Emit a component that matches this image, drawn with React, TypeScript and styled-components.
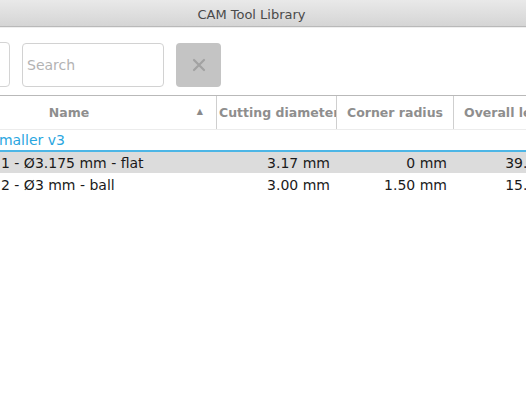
import styled, { createGlobalStyle } from 'styled-components';

const GlobalStyle = createGlobalStyle`
  html, body {
    margin: 0;
    padding: 0;
    background: #ffffff;
    overflow: hidden;
  }
  body {
    font-family: 'DejaVu Sans', 'Liberation Sans', sans-serif;
  }
`;

type Tool = { name: string; diameter: string; radius: string; length: string; selected?: boolean };

const tools: Tool[] = [
  { name: '1 - Ø3.175 mm - flat', diameter: '3.17 mm', radius: '0 mm', length: '39.00 mm', selected: true },
  { name: '2 - Ø3 mm - ball', diameter: '3.00 mm', radius: '1.50 mm', length: '15.00 mm' },
];

// column widths of the tool table, left to right
const cols = [275, 120, 117, 130];

export default function App() {
  return (
    <>
      <GlobalStyle />
      <Viewport>
        <Window>
          <TitleBar>
            <Title>CAM Tool Library</Title>
          </TitleBar>
          <Toolbar>
            <FilterBox />
            <SearchInput placeholder="Search" />
            <ClearButton>
              <svg width="14" height="14" viewBox="0 0 14 14">
                <path d="M2 2 L12 12 M12 2 L2 12" stroke="#a2a2a2" strokeWidth="2.2" strokeLinecap="round" />
              </svg>
            </ClearButton>
          </Toolbar>
          <Table>
            <HeaderRow>
              <HeaderCell $width={cols[0]}>
                <NameLabel>Name</NameLabel>
                <SortArrow>▲</SortArrow>
              </HeaderCell>
              <HeaderCell $width={cols[1]} $start={2}>Cutting diameter</HeaderCell>
              <HeaderCell $width={cols[2]}>Corner radius</HeaderCell>
              <HeaderCell $width={cols[3]} $start={10} $last>Overall length</HeaderCell>
            </HeaderRow>
            <GroupRow>Smaller v3</GroupRow>
            {tools.map((t) => (
              <ToolRow key={t.name} $selected={t.selected}>
                <NameCell $width={cols[0]}>{t.name}</NameCell>
                <ValueCell $width={cols[1]}>{t.diameter}</ValueCell>
                <ValueCell $width={cols[2]}>{t.radius}</ValueCell>
                <ValueCell $width={cols[3]}>{t.length}</ValueCell>
              </ToolRow>
            ))}
          </Table>
        </Window>
      </Viewport>
    </>
  );
}

const Viewport = styled.div`
  width: 526px;
  height: 394px;
  overflow: hidden;
  background: #ffffff;
`;

const Window = styled.div`
  width: 619px;
  margin-left: -58px;
  display: flex;
  flex-direction: column;
`;

const TitleBar = styled.div`
  height: 26px;
  border-bottom: 1px solid #b9b9b9;
  box-shadow: 0 1px 0 #efefef;
  background: linear-gradient(#e9e9e9, #d5d5d5);
  display: flex;
  align-items: center;
  justify-content: center;
`;

const Title = styled.span`
  font-size: 13px;
  color: #4a4a4a;
  padding-top: 3px;
`;

const Toolbar = styled.div`
  display: flex;
  align-items: center;
  gap: 12px;
  padding-top: 15px;
  height: 45px;
`;

const FilterBox = styled.div`
  width: 100px;
  height: 43px;
  margin-left: -34px;
  border: 1px solid #d4d4d4;
  border-radius: 4px;
`;

const SearchInput = styled.input`
  width: 142px;
  height: 44px;
  box-sizing: border-box;
  border: 1px solid #d2d2d2;
  border-radius: 4px;
  padding: 0 4px;
  font-family: 'DejaVu Sans', sans-serif;
  font-size: 14px;
  outline: none;
  &::placeholder {
    color: #b3b3b3;
  }
`;

const ClearButton = styled.div`
  width: 45px;
  height: 44px;
  border-radius: 4px;
  background: #c4c4c4;
  display: flex;
  align-items: center;
  justify-content: center;
`;

const Table = styled.div`
  margin-top: 8px;
  border-top: 1px solid #b9b9b9;
  display: flex;
  flex-direction: column;
`;

const HeaderRow = styled.div`
  display: flex;
  height: 33px;
  border-bottom: 1px solid #ececec;
`;

const HeaderCell = styled.div<{ $width: number; $last?: boolean; $start?: number }>`
  width: ${(p) => p.$width}px;
  flex: none;
  box-sizing: border-box;
  border-right: ${(p) => (p.$last ? 'none' : '1px solid #cfcfcf')};
  display: flex;
  align-items: center;
  justify-content: ${(p) => (p.$start !== undefined ? 'flex-start' : 'center')};
  padding: ${(p) => (p.$start !== undefined ? `0 0 0 ${p.$start}px` : '0 10px')};
  overflow: hidden;
  white-space: nowrap;
  font-size: 12.5px;
  font-weight: bold;
  color: #8e8e8e;
  position: relative;
`;

const NameLabel = styled.span`
  padding-right: 20px;
`;

const SortArrow = styled.span`
  position: absolute;
  right: 13px;
  top: 11px;
  font-size: 8px;
  color: #8a8a8a;
`;

const GroupRow = styled.div`
  height: 20px;
  border-bottom: 2px solid #4db6e6;
  display: flex;
  align-items: center;
  padding-left: 48px;
  font-size: 14px;
  color: #2aa6df;
`;

const ToolRow = styled.div<{ $selected?: boolean }>`
  display: flex;
  height: 21px;
  align-items: center;
  background: ${(p) => (p.$selected ? '#dcdcdc' : 'transparent')};
  border-bottom: 1px solid #ffffff;
  font-size: 14px;
  color: #1a1a1a;
`;

const NameCell = styled.div<{ $width: number }>`
  width: ${(p) => p.$width}px;
  flex: none;
  box-sizing: border-box;
  padding-left: 59px;
  white-space: nowrap;
  overflow: hidden;
`;

const ValueCell = styled.div<{ $width: number }>`
  width: ${(p) => p.$width}px;
  flex: none;
  box-sizing: border-box;
  text-align: right;
  padding-right: 7px;
  white-space: nowrap;
`;
